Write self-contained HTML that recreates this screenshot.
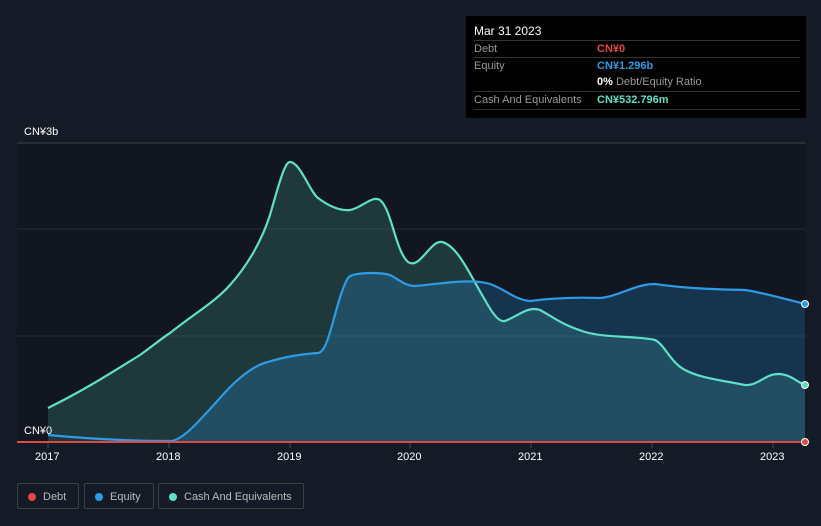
<!DOCTYPE html>
<html><head><meta charset="utf-8"><style>
body{margin:0;background:#151b26;font-family:"Liberation Sans",sans-serif;}
.wrap{position:relative;width:821px;height:526px;overflow:hidden;}
.tip{position:absolute;left:466px;top:16px;width:340px;height:102px;background:#000;color:#fff;font-size:11px;}
.tip .row{position:absolute;left:8px;right:6px;border-top:1px solid #333;height:17px;line-height:17px;}
.lab{color:#999;}
.val{position:absolute;left:123px;top:0;font-weight:bold;}
.leg{position:absolute;top:483px;height:26px;border:1px solid #3a404a;border-radius:2px;color:#bbb;font-size:11px;line-height:26px;box-sizing:border-box;}
.dot{display:inline-block;width:8px;height:8px;border-radius:50%;margin:0 7px 0 10px;vertical-align:-1px;}
.ax{position:absolute;color:#fff;font-size:11px;}
</style></head><body><div class="wrap">
<svg width="821" height="526" style="position:absolute;left:0;top:0">
<rect x="17" y="143" width="788" height="299" fill="#111620"/>
<line x1="17" y1="143" x2="805" y2="143" stroke="#3a404a"/>
<line x1="17" y1="229" x2="805" y2="229" stroke="#252b36"/>
<line x1="17" y1="336" x2="805" y2="336" stroke="#252b36"/>
<path d="M48,408 C80,392 100,380 140,355 C155,344 165,336 170,333 C195,313 215,302 230,285 C248,265 262,240 270,215 C280,180 285,162 290,162 C300,162 310,192 318,198 C330,207 340,211 350,210 C362,208 372,195 380,200 C392,210 395,250 408,262 C420,270 430,240 442,242 C458,246 470,275 485,300 C495,318 500,322 505,321 C520,315 528,306 540,310 C555,318 560,324 585,332 C605,338 640,336 655,340 C665,345 670,362 685,370 C700,378 720,380 745,385 C758,386 765,374 778,374 C790,374 797,382 805,385 L805,442 L48,442 Z" fill="#5de0c6" fill-opacity="0.17"/>
<path d="M48,435 C80,438 120,441 172,441 C185,438 200,420 220,398 C240,375 255,365 268,362 C280,358 300,354 318,353 C330,352 335,300 348,278 C352,272 380,272 390,275 C400,280 405,286 415,286 C440,284 470,278 490,284 C505,289 515,300 530,301 C545,299 570,297 600,298 C620,296 635,284 655,284 C670,286 690,289 745,290 C760,292 785,299 805,304 L805,442 L172,442 Z" fill="#2a8fd8" fill-opacity="0.25"/>
<path d="M48,408 C80,392 100,380 140,355 C155,344 165,336 170,333 C195,313 215,302 230,285 C248,265 262,240 270,215 C280,180 285,162 290,162 C300,162 310,192 318,198 C330,207 340,211 350,210 C362,208 372,195 380,200 C392,210 395,250 408,262 C420,270 430,240 442,242 C458,246 470,275 485,300 C495,318 500,322 505,321 C520,315 528,306 540,310 C555,318 560,324 585,332 C605,338 640,336 655,340 C665,345 670,362 685,370 C700,378 720,380 745,385 C758,386 765,374 778,374 C790,374 797,382 805,385" fill="none" stroke="#5de0c6" stroke-width="2.2"/>
<path d="M48,435 C80,438 120,441 172,441 C185,438 200,420 220,398 C240,375 255,365 268,362 C280,358 300,354 318,353 C330,352 335,300 348,278 C352,272 380,272 390,275 C400,280 405,286 415,286 C440,284 470,278 490,284 C505,289 515,300 530,301 C545,299 570,297 600,298 C620,296 635,284 655,284 C670,286 690,289 745,290 C760,292 785,299 805,304" fill="none" stroke="#2e9be6" stroke-width="2.2"/>
<line x1="17" y1="442" x2="805" y2="442" stroke="#e04848" stroke-width="2"/>
<g stroke="#444b55"><line x1="48" y1="443" x2="48" y2="448"/><line x1="169" y1="443" x2="169" y2="448"/><line x1="290" y1="443" x2="290" y2="448"/><line x1="410" y1="443" x2="410" y2="448"/><line x1="531" y1="443" x2="531" y2="448"/><line x1="652" y1="443" x2="652" y2="448"/><line x1="773" y1="443" x2="773" y2="448"/></g>
<circle cx="805" cy="304" r="3.5" fill="#2e9be6" stroke="#fff" stroke-width="1"/>
<circle cx="805" cy="385" r="3.5" fill="#5de0c6" stroke="#fff" stroke-width="1"/>
<circle cx="805" cy="442" r="3.5" fill="#e04848" stroke="#fff" stroke-width="1"/>
</svg>
<div class="ax" style="left:24px;top:126px">CN¥3b</div>
<div class="ax" style="left:24px;top:425px">CN¥0</div>
<div class="ax" style="left:35px;top:451px">2017</div>
<div class="ax" style="left:156px;top:451px">2018</div>
<div class="ax" style="left:277px;top:451px">2019</div>
<div class="ax" style="left:397px;top:451px">2020</div>
<div class="ax" style="left:518px;top:451px">2021</div>
<div class="ax" style="left:639px;top:451px">2022</div>
<div class="ax" style="left:760px;top:451px">2023</div>
<div class="tip">
<div style="position:absolute;left:8px;top:8px;font-size:12px">Mar 31 2023</div>
<div class="row" style="top:24px"><span class="lab">Debt</span><span class="val" style="color:#e84545">CN¥0</span></div>
<div class="row" style="top:41px"><span class="lab">Equity</span><span class="val" style="color:#2e9be6">CN¥1.296b</span></div>
<div class="row" style="top:58px;border-top:none"><span class="val"><b>0%</b> <span style="color:#999;font-weight:normal">Debt/Equity Ratio</span></span></div>
<div class="row" style="top:75px"><span class="lab">Cash And Equivalents</span><span class="val" style="color:#5de0c6">CN¥532.796m</span></div>
<div class="row" style="top:93px;height:0"></div>
</div>
<div class="leg" style="left:17px;width:62px"><span class="dot" style="background:#e84545"></span>Debt</div>
<div class="leg" style="left:84px;width:70px"><span class="dot" style="background:#2e9be6"></span>Equity</div>
<div class="leg" style="left:158px;width:146px"><span class="dot" style="background:#5de0c6"></span>Cash And Equivalents</div>
</div></body></html>
